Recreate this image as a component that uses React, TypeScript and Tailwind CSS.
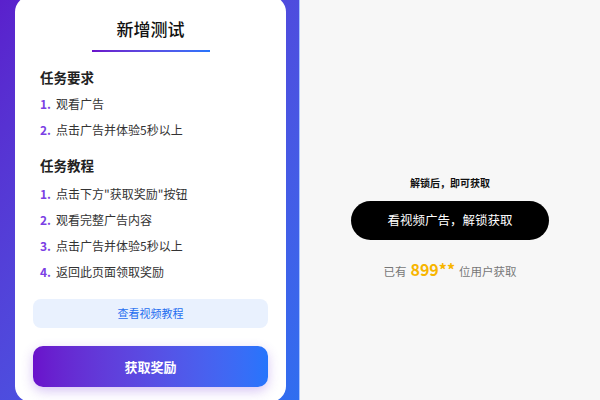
import React from "react";

const cjk = '"Noto Sans CJK SC", "Noto Sans", sans-serif';

const requirements = ["观看广告", "点击广告并体验5秒以上"];
const tutorial = [
  "点击下方\"获取奖励\"按钮",
  "观看完整广告内容",
  "点击广告并体验5秒以上",
  "返回此页面领取奖励",
];

function StepList({ items }: { items: string[] }) {
  return (
    <ol className="flex flex-col gap-[8px]">
      {items.map((text, i) => (
        <li key={i} className="flex items-center h-[18px] text-[12px] text-[#333]">
          <span className="w-[16px] font-bold text-[#7b3fe4]">{i + 1}.</span>
          <span>{text}</span>
        </li>
      ))}
    </ol>
  );
}

export default function App() {
  return (
    <div className="flex w-[600px] h-[400px] overflow-hidden" style={{ fontFamily: cjk }}>
      {/* Left panel */}
      <div className="w-[300px] h-[400px] shrink-0 overflow-hidden bg-gradient-to-br from-[#5a20cc] to-[#2f6ef0] pl-[15px] pr-[13px] border-r border-[#a8c4ff]">
        <div className="-mt-[4px] h-[406px] bg-white rounded-[16px] px-[18px] pt-[20px] flex flex-col">
          {/* Title */}
          <div className="flex flex-col items-center">
            <h1 className="text-[17px] font-medium text-[#111] leading-[26px]">新增测试</h1>
            <div className="mt-[8px] w-[118px] h-[2px] bg-gradient-to-r from-[#6a11cb] to-[#2575fc]" />
          </div>

          {/* Requirements */}
          <h2 className="mt-[15px] text-[13.5px] font-bold text-[#222] leading-[20px] px-[7px]">任务要求</h2>
          <div className="mt-[8px] px-[7px]">
            <StepList items={requirements} />
          </div>

          {/* Tutorial */}
          <h2 className="mt-[16px] text-[13.5px] font-bold text-[#222] leading-[20px] px-[7px]">任务教程</h2>
          <div className="mt-[10px] px-[7px]">
            <StepList items={tutorial} />
          </div>

          {/* Video tutorial */}
          <button className="mt-[18px] h-[29px] w-full rounded-[8px] bg-[#e9f1fe] text-[11px] text-[#1f6ef0]">
            查看视频教程
          </button>

          {/* Reward */}
          <button className="mt-[18px] h-[41px] w-full rounded-[10px] bg-gradient-to-r from-[#6a11cb] to-[#2575fc] text-[13px] font-bold text-white shadow-[0_4px_12px_rgba(120,60,220,0.3)]">
            获取奖励
          </button>
        </div>
      </div>

      {/* Right panel */}
      <div className="flex-1 bg-[#f7f7f7] flex flex-col items-center justify-center pt-[56px]">
        <p className="text-[10px] font-bold text-[#111] leading-[14px]">解锁后，即可获取</p>
        <button className="mt-[11px] w-[198px] h-[39px] rounded-full bg-black text-white text-[12.5px]">
          看视频广告，解锁获取
        </button>
        <p className="mt-[17px] flex items-baseline gap-[4px] text-[11.5px] text-[#777]">
          <span>已有</span>
          <span className="text-[16px] font-bold text-[#f7b500]">899**</span>
          <span>位用户获取</span>
        </p>
      </div>
    </div>
  );
}
